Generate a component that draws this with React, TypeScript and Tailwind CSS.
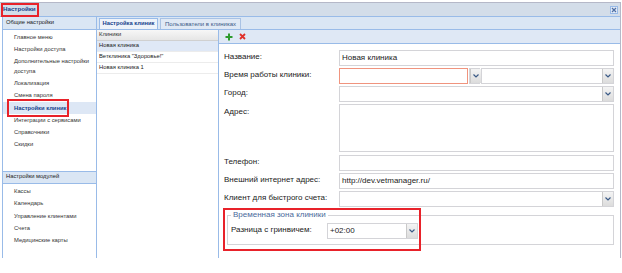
import React from 'react';

const NAV_MAIN = [
  'Главное меню',
  'Настройки доступа',
  'Дополнительные настройки доступа',
  'Локализация',
  'Смена пароля',
  'Настройки клиник',
  'Интеграции с сервисами',
  'Справочники',
  'Скидки',
];

const NAV_MODULES = ['Кассы', 'Календарь', 'Управление клиентами', 'Счета', 'Медицинские карты'];

const CLINICS = ['Новая клиника', 'Ветклиника "Здоровье!"', 'Новая клиника 1'];

function Trigger() {
  return (
    <div className="w-[11px] h-full flex items-center justify-center bg-gradient-to-b from-[#f4f4f4] to-[#dcdcdc] border-l border-[#c9c9c9]">
      <svg width="6" height="4" viewBox="0 0 6 4">
        <path d="M0.5 0.5 L3 3 L5.5 0.5" fill="none" stroke="#3b5a86" strokeWidth="1.2" />
      </svg>
    </div>
  );
}

function Field({ value = '', red = false, combo = false, className = '' }: { value?: string; red?: boolean; combo?: boolean; className?: string }) {
  return (
    <div className={`h-[16px] flex bg-white border ${red ? 'border-[#f0947e]' : 'border-[#d4d4d8]'} ${className}`}>
      <div className="flex-1 px-[2px] flex items-center text-[8px] text-[#222] leading-none whitespace-nowrap">{value}</div>
      {combo && <Trigger />}
    </div>
  );
}

function Row({ label, children }: { label: string; children: React.ReactNode }) {
  return (
    <div className="flex items-start h-[16px]">
      <div className="w-[115px] shrink-0 pt-[3px] text-[8px] leading-none text-[#222] whitespace-nowrap">{label}</div>
      <div className="flex-1 flex">{children}</div>
    </div>
  );
}

export default function App() {
  return (
    <div className="relative w-[622px] h-[273px] bg-white overflow-hidden" style={{ fontFamily: '"Liberation Sans", Arial, sans-serif' }}>
      <div className="mt-[2px] w-[621px] h-[256px] flex flex-col border-t border-[#b5b8c8] border-r border-[#99bbe8]">
        {/* title bar */}
        <div className="h-[14px] shrink-0 bg-[#d3dde9] flex items-center justify-between pl-[3px] pr-[2px] border-b border-[#99bbe8]">
          <span className="text-[6.2px] font-bold text-[#15428b] leading-none whitespace-nowrap">Настройки</span>
          <div className="w-[8px] h-[8px] bg-[#e3ebf7] border border-[#99bbe8] flex items-center justify-center">
            <svg width="6" height="6" viewBox="0 0 6 6">
              <path d="M1 1 L5 5 M5 1 L1 5" stroke="#4f6fa3" strokeWidth="1.2" />
            </svg>
          </div>
        </div>

        <div className="flex flex-1 min-h-0">
          {/* left nav */}
          <div className="w-[95px] ml-[2px] shrink-0 flex flex-col border-l border-r border-[#99bbe8] bg-white">
            <div className="h-[13px] bg-[#dae6f4] border-b border-[#99bbe8] flex items-center px-[3px] text-[5.8px] text-[#222] leading-none whitespace-nowrap">Общие настройки</div>
            <div className="flex flex-col pt-[1px]">
              {NAV_MAIN.map((n) => (
                <div
                  key={n}
                  className={`pl-[11px] pr-[2px] py-[2.6px] text-[5.8px] leading-[7px] whitespace-nowrap ${n === 'Настройки клиник' ? 'bg-[#dde7f5] font-bold text-[#15428b]' : 'text-[#333]'}`}
                >
                  {n === 'Дополнительные настройки доступа' ? (
                    <>
                      Дополнительные настройки
                      <br />
                      <span className="inline-block mt-[3px]">доступа</span>
                    </>
                  ) : (
                    n
                  )}
                </div>
              ))}
            </div>
            <div className="mt-[20px] h-[13px] bg-[#dae6f4] border-t border-b border-[#99bbe8] flex items-center px-[3px] text-[5.8px] text-[#222] leading-none whitespace-nowrap">Настройки модулей</div>
            <div className="flex flex-col pt-[2px]">
              {NAV_MODULES.map((n) => (
                <div key={n} className="pl-[11px] py-[2.6px] text-[5.8px] leading-[7px] text-[#333] whitespace-nowrap">{n}</div>
              ))}
            </div>
          </div>

          {/* tabs area */}
          <div className="flex-1 flex flex-col">
            <div className="h-[13px] shrink-0 bg-[#dae6f4] border-b border-[#99bbe8] flex items-end pl-[2px] gap-[2px]">
              <div className="h-[11px] w-[59px] justify-center bg-[#eef3fa] border border-b-0 border-[#99bbe8] flex items-center text-[5.8px] font-bold text-[#15428b] leading-none whitespace-nowrap">Настройка клиник</div>
              <div className="h-[11px] w-[81px] justify-center bg-[#e0e9f5] border border-b-0 border-[#a9c2e4] flex items-center text-[6px] text-[#3b5a86] leading-none whitespace-nowrap">Пользователи в клиниках</div>
            </div>
            <div className="flex flex-1 min-h-0">
              {/* clinics grid */}
              <div className="w-[121px] shrink-0 flex flex-col bg-white">
                <div className="h-[11px] bg-gradient-to-b from-[#f7f7f7] to-[#e6e6e6] border-b border-[#d0d0d0] flex items-center px-[2px] text-[5.8px] text-[#333] leading-none">Клиники</div>
                {CLINICS.map((c, i) => (
                  <div key={c} className={`h-[11px] border-b border-[#ececec] flex items-center px-[2px] text-[5.8px] leading-none text-[#222] whitespace-nowrap ${i === 0 ? 'bg-[#dfe8f6]' : ''}`}>{c}</div>
                ))}
              </div>

              {/* form */}
              <div className="flex-1 flex flex-col border-l border-[#99bbe8] bg-white">
                <div className="h-[14px] shrink-0 bg-[#dfe8f5] border-b border-[#99bbe8] flex items-center gap-[6px] pl-[6px]">
                  <svg width="8" height="8" viewBox="0 0 8 8">
                    <path d="M4 0.5 V7.5 M0.5 4 H7.5" stroke="#2e9b2e" strokeWidth="2" />
                  </svg>
                  <svg width="7" height="7" viewBox="0 0 7 7">
                    <path d="M1 1 L6 6 M6 1 L1 6" stroke="#e0302a" strokeWidth="1.8" />
                  </svg>
                </div>
                <div className="flex flex-col gap-[2px] pl-[5px] pr-[6px] pt-[6px]">
                  <Row label="Название:">
                    <Field value="Новая клиника" className="flex-1" />
                  </Row>
                  <Row label="Время работы клиники:">
                    <div className="w-[141px] flex">
                      <Field red className="flex-1" />
                      <div className="w-[11px] h-[16px] ml-[1px] border border-[#d4d4d8]"><Trigger /></div>
                    </div>
                    <Field combo className="flex-1 ml-[1px]" />
                  </Row>
                  <Row label="Город:">
                    <Field combo className="flex-1" />
                  </Row>
                  <div className="flex items-start h-[48px] mb-[1px]">
                    <div className="w-[115px] shrink-0 pt-[4px] text-[8px] leading-none text-[#222]">Адрес:</div>
                    <div className="flex-1 h-[48px] border border-[#d4d4d8] bg-white" />
                  </div>
                  <Row label="Телефон:">
                    <Field className="flex-1" />
                  </Row>
                  <Row label="Внешний интернет адрес:">
                    <Field value="http://dev.vetmanager.ru/" className="flex-1" />
                  </Row>
                  <Row label="Клиент для быстрого счета:">
                    <Field combo className="flex-1" />
                  </Row>
                  <fieldset className="mt-[2px] ml-[3px] h-[34px] border border-[#d4d4d8] px-[3px] pb-[4px]">
                    <legend className="px-[2px] text-[8px] leading-none text-[#4b6a9b] whitespace-nowrap">Временная зона клиники</legend>
                    <div className="flex items-start mt-[4px]">
                      <div className="w-[96px] shrink-0 pt-[3px] text-[8px] leading-none text-[#222] whitespace-nowrap">Разница с гринвичем:</div>
                      <Field value="+02:00" combo className="w-[91px]" />
                    </div>
                  </fieldset>
                </div>
              </div>
            </div>
          </div>
        </div>
      </div>

      {/* red highlight boxes */}
      <div className="absolute left-[1px] top-[3px] w-[38px] h-[14px] border-2 border-[#e8222a]" />
      <div className="absolute left-[7px] top-[99px] w-[62px] h-[18px] border-2 border-[#e8222a]" />
      <div className="absolute left-[223px] top-[208px] w-[198px] h-[43px] border-2 border-[#e8222a]" />
    </div>
  );
}
